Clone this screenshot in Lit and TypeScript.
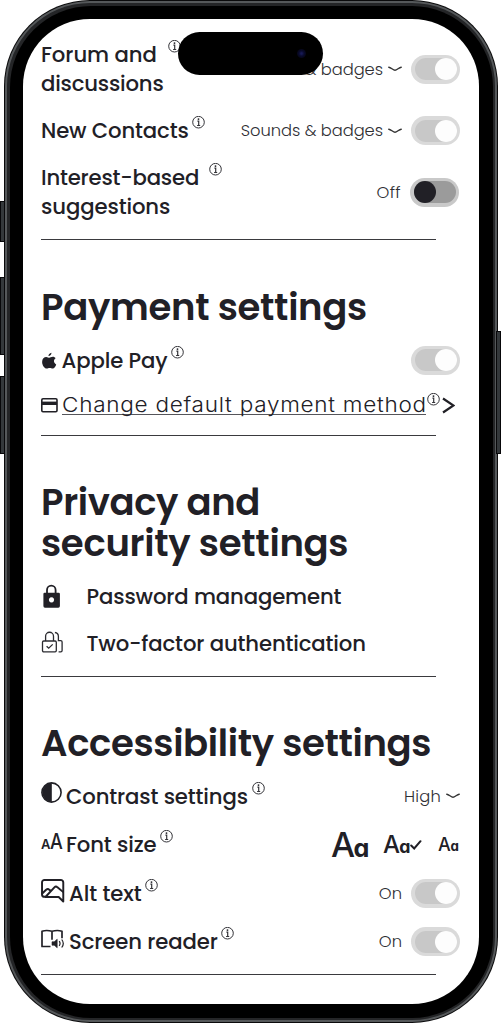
import { LitElement, html, css, svg, nothing } from "lit";
import { customElement, property } from "lit/decorators.js";

/** One line of text whose tracking is computed so that it fills `width` pixels. */
@customElement("fit-text")
class FitText extends LitElement {
  @property({ type: Number }) width = 0;
  @property() text = "";
  static styles = css`
    :host { display: block; white-space: nowrap; }
    .t { display: inline-block; }
  `;
  firstUpdated() {
    const el = this.renderRoot.querySelector(".t") as HTMLElement;
    const natural = el.offsetWidth;
    el.style.letterSpacing = (this.width - natural) / this.text.length + "px";
  }
  render() {
    return html`<span class="t">${this.text}</span>`;
  }
}

@customElement("info-mark")
class InfoMark extends LitElement {
  static styles = css`
    :host { display: block; width: 13px; height: 13px; }
    svg { display: block; }
  `;
  render() {
    return html`<svg width="13" height="13" viewBox="0 0 13 13" fill="none" stroke="#333338">
      <circle cx="6.5" cy="6.2" r="5.8" stroke-width="1" />
      <path d="M5.4 5.1h1.300v4.400M5.1 9.500h3.100" stroke-width="1.2" />
      <circle cx="6.500" cy="3.100" r=".95" fill="#222228" stroke="none" />
    </svg>`;
  }
}

@customElement("toggle-switch")
class ToggleSwitch extends LitElement {
  @property({ type: Boolean, reflect: true }) off = false;
  static styles = css`
    :host { display: block; box-sizing: border-box; width: 49px; height: 29px; border-radius: 15px; background: #dadada; padding: 3.5px; }
    .track { height: 22px; border-radius: 11px; background: #c8c8c8; display: flex; justify-content: flex-end; }
    .knob { width: 22px; height: 22px; border-radius: 50%; background: #fdfdfd; }
    :host([off]) { background: #c9c9c9; margin-right: 1px; }
    :host([off]) .track { background: #9b9b9b; justify-content: flex-start; }
    :host([off]) .knob { background: #212026; }
  `;
  render() {
    return html`<div class="track"><div class="knob"></div></div>`;
  }
}

const caret = svg`<svg class="caret" width="14" height="6" viewBox="0 0 14 6" fill="none" stroke="#333" stroke-width="1.4" stroke-linecap="round"><path d="M.8 1.200C3 1.600 5.200 4.200 7 4.200S11 1.600 13.200 1.200"/></svg>`;

const icons = {
  apple: svg`<svg width="16" height="18" viewBox="0 0 15 17" fill="#212026"><path d="M9.800.600c.2 1.600-1.200 3.200-2.800 3.200C6.800 2.300 8.300.8 9.800.600zM13.700 6c-2.300 1.500-1.800 4.700.6 5.700-.6 1.700-1.800 4-3.300 4-1.100 0-1.500-.7-2.800-.7s-1.800.7-2.800.7C3.100 15.700 1 12.300 1 9.400c0-3 1.900-4.700 3.900-4.700 1.200 0 2.200.8 2.900.8.8 0 1.900-.9 3.300-.9 1.100 0 2 .5 2.600 1.400z"/></svg>`,
  card: svg`<svg width="17" height="15" viewBox="0 0 17 15"><rect x=".8" y=".8" width="15.200" height="13" rx="1.200" fill="none" stroke="#212026" stroke-width="1.600"/><path d="M1 3.600h15v3.400H1z" fill="#212026"/></svg>`,
  lock: svg`<svg width="20" height="24" viewBox="0 0 20 24"><path d="M6 10V6a4.300 4.300 0 0 1 8.600 0v4" fill="none" stroke="#212026" stroke-width="1.800"/><path fill-rule="evenodd" fill="#212026" d="M3.600 8.800h14a1.300 1.300 0 0 1 1.300 1.300v12a1.600 1.600 0 0 1-1.600 1.600H4a1.600 1.600 0 0 1-1.600-1.600v-12A1.300 1.300 0 0 1 3.600 8.800zM10.500 13.300a2.600 2.600 0 1 0 .01 0z"/></svg>`,
  locks: svg`<svg width="22" height="22" viewBox="0 0 22 22" fill="none" stroke="#2b2b30" stroke-width="1.300"><path d="M4.600 10V5.200a3.700 3.700 0 0 1 7.900 0V10"/><rect x="1.500" y="10" width="13.800" height="10.800" rx="1.200"/><path d="m5.600 15.200 2.100 2 4-3.800"/><path d="M13.900 1.500c2.200.3 3.500 1.800 3.500 3.900v4.300h2.400a1.300 1.300 0 0 1 1.300 1.300v8.500a1.300 1.300 0 0 1-1.300 1.300h-2.200" /></svg>`,
  contrast: svg`<svg width="21" height="21" viewBox="0 0 21 21"><circle cx="10.500" cy="10.500" r="9.600" fill="none" stroke="#212026" stroke-width="1.600"/><path d="M10.800 1v19A9.500 9.500 0 0 1 10.800 1z" fill="#212026"/></svg>`,
  picture: svg`<svg width="23.500" height="24" viewBox="0 0 23 24" preserveAspectRatio="none" fill="none" stroke="#212026" stroke-width="1.900" stroke-linejoin="round" stroke-linecap="round"><path d="M4 17.800h-.6A2.400 2.400 0 0 1 1 15.400V3.400A2.400 2.400 0 0 1 3.400 1h16A2.400 2.400 0 0 1 21.800 3.400V22.500l-4.500-4.500H4"/><path d="M1.200 14.500 5 10.800q1.700-1.500 3.200 0L9 11.500M4.800 17.500l8.300-9.200q1.500-1.500 3 0l5.400 4.600"/></svg>`,
  reader: svg`<svg width="24" height="21" viewBox="0 0 24 21" fill="none" stroke="#212026" stroke-width="1.700" stroke-linejoin="round"><path d="M9.500 17.500H1V2.200Q5.500.8 11 2.200q5.500-1.400 10 0v7M11 2.200v8.600"/><path d="M11 12.800h2.200l3-2.600v8.600l-3-2.600H11z" fill="#212026" stroke-width=".6"/><path d="M18.200 12.200q1.700 2.300 0 4.600M20.700 10.500q3.200 4 0 8" stroke-width="1.200"/></svg>`,
  glyphs: html`<span class="glyphs"><span class="g1">A</span><span class="g2">A</span></span>`,
};

const sw = html`<toggle-switch></toggle-switch>`;

@customElement("app-root")
class AppRoot extends LitElement {
  static styles = css`
    :host { display: block; width: 501px; height: 1024px; overflow: hidden; background: #fff; position: relative; color: #212026; font-family: Poppins, Inter, sans-serif; }
    .device { box-sizing: border-box; width: 494px; height: 1023px; margin-left: 4px; border-radius: 86px; padding: 1px; background: #0a0a0b; }
    .rim { box-sizing: border-box; height: 100%; border-radius: 85px; padding: 2px; background: #55585a; }
    .edge { box-sizing: border-box; height: 100%; border-radius: 83px; padding: 2.5px; background: #242527; }
    .bezel { box-sizing: border-box; height: 100%; border-radius: 81px; padding: 13.5px; background: #000; }
    .screen { box-sizing: border-box; height: 985px; border-radius: 67px; background: #fff; padding: 21px 18px 0; overflow: hidden; }
    .button { position: absolute; width: 5px; background: #34383b; border: 1px solid #08080a; box-sizing: border-box; }
    .b1 { left: 0; top: 201px; height: 41px; }
    .b2 { left: 0; top: 277px; height: 78px; }
    .b3 { left: 0; top: 376px; height: 78px; }
    .b4 { right: 0; top: 331px; height: 123px; }
    .island { position: absolute; left: 178px; top: 32px; width: 145px; height: 42.5px; border-radius: 22px; background: #000; }
    .camera { position: absolute; right: 17px; top: 17px; width: 9px; height: 9px; border-radius: 50%; background: radial-gradient(#171a55 0 10%, #090a2c 40%, #020205); }
    section { border-bottom: 1.5px solid #3a3a3e; width: 395px; box-sizing: border-box; }
    .rows { display: flex; flex-direction: column; width: 419px; }
    .s1 { height: 200px; } .s1 .rows { gap: 18px; }
    .s2 { height: 195.5px; padding-top: 46.5px; } .s2 .rows { gap: 15.5px; }
    .s3 { height: 241px; padding-top: 46px; } .s3 .rows { gap: 18.5px; }
    .s4 { height: 298px; padding-top: 46.5px; } .s4 .rows { gap: 19.6px; }
    h2 { margin: 0 0 18px; font-size: 37px; font-weight: 600; line-height: 41px; white-space: nowrap; }
    .s4 h2 { margin-bottom: 17.6px; }
    .row { display: flex; align-items: flex-start; min-height: 29px; }
    .s4 .row { height: 29px; }
    .label { font-size: 21.2px; line-height: 29px; font-weight: 500; }
    .link { font-family: Inter, sans-serif; font-size: 20.5px; font-weight: 300; width: 364px; height: 24px; border-bottom: 1.5px solid #55555a; }
    .link fit-text { transform: scaleX(1.1); transform-origin: left; }
    .lead { display: flex; align-items: flex-start; flex: none; }
    .w20 { width: 20.5px; } .w21 { width: 21px; } .w25 { width: 25px; } .w28 { width: 28px; } .w45 { width: 45.5px; }
    .p0 { padding-top: 0; } .p6 { padding-top: 6px; } .p8 { padding-top: 8px; } .p2 { padding-top: 2px; }
    .i2 { margin: 2.5px 0 0 1px; } .i4 { margin-left: 3.5px; } .i5 { margin-left: 4.5px; } .i12 { margin-left: 10px; }
    .trail { margin-left: auto; align-self: center; display: flex; align-items: center; font-size: 16.3px; line-height: 19px; font-weight: 300; color: #2e2e33; }
    .trail toggle-switch { margin-left: 9px; }
    .caret { margin-left: 5px; }
    .chevron { margin: 7px 0 0 2px; }
    .glyphs { display: flex; align-items: baseline; line-height: 29px; font-family: Inter, sans-serif; margin-top: -3.5px; }
    .g1 { font-size: 13px; font-weight: 600; } .g2 { font-size: 22px; font-weight: 500; transform: scaleX(.82); transform-origin: left; }
    .sizes { display: flex; margin-left: auto; align-items: flex-start; font-family: Inter, sans-serif; font-feature-settings: "cv11"; font-weight: 500; line-height: 29px; white-space: nowrap; }
    .big { width: 37px; font-size: 34px; letter-spacing: -1.5px; }
    .mid { width: 26px; margin-left: 15px; font-size: 24px; letter-spacing: -.8px; }
    .small { width: 22px; margin-left: 16px; font-size: 18px; letter-spacing: -.2px; }
    .sizes span span { font-size: .74em; font-weight: 700; }
    .tick { margin: 9.5px 0 0 1px; }
  `;

  label(lines: [string, number][], info = "", link = false) {
    return html`<div class="label ${link ? "link" : ""}">${lines.map(
        ([t, w]) => html`<fit-text text=${t} width=${w}></fit-text>`)}</div>
      ${info ? html`<info-mark class=${info}></info-mark>` : nothing}`;
  }

  render() {
    return html`
      <div class="button b1"></div><div class="button b2"></div><div class="button b3"></div><div class="button b4"></div>
      <div class="device"><div class="rim"><div class="edge"><div class="bezel"><main class="screen">
        <section class="s1"><div class="rows">
          <div class="row">${this.label([["Forum and", 115.5], ["discussions", 123]], "i5")}
            <div class="trail"><fit-text text="Sounds & badges" width="142.500"></fit-text>${caret}${sw}</div></div>
          <div class="row">${this.label([["New Contacts", 147.5]], "i4")}
            <div class="trail"><fit-text text="Sounds & badges" width="142.500"></fit-text>${caret}${sw}</div></div>
          <div class="row">${this.label([["Interest-based", 158.5], ["suggestions", 129]], "i12")}
            <div class="trail"><fit-text text="Off" width="24"></fit-text><toggle-switch off></toggle-switch></div></div>
        </div></section>
        <section class="s2"><h2><fit-text text="Payment settings" width="326"></fit-text></h2><div class="rows">
          <div class="row"><span class="lead w20 p6">${icons.apple}</span>${this.label([["Apple Pay", 106]], "i4")}
            <div class="trail">${sw}</div></div>
          <div class="row"><span class="lead w21 p8">${icons.card}</span>${this.label([["Change default payment method", 332]], "i2", true)}
            <svg class="chevron" width="13" height="17" viewBox="0 0 13 17" fill="none" stroke="#212026" stroke-width="2.200"><path d="m1 1.500 10.500 7L1 15.500"/></svg></div>
        </div></section>
        <section class="s3"><h2><fit-text text="Privacy and" width="219"></fit-text><fit-text text="security settings" width="307"></fit-text></h2><div class="rows">
          <div class="row"><span class="lead w45 p2">${icons.lock}</span>${this.label([["Password management", 254.5]])}</div>
          <div class="row"><span class="lead w45 p2">${icons.locks}</span>${this.label([["Two-factor authentication", 279]])}</div>
        </div></section>
        <section class="s4"><h2><fit-text text="Accessibility settings" width="390.500"></fit-text></h2><div class="rows">
          <div class="row"><span class="lead w25 p0">${icons.contrast}</span>${this.label([["Contrast settings", 182]], "i5")}
            <div class="trail"><fit-text text="High" width="37"></fit-text>${caret}</div></div>
          <div class="row"><span class="lead w25">${icons.glyphs}</span>${this.label([["Font size", 91]], "i4")}
            <div class="sizes"><span class="big">A<span>a</span></span><span class="mid">A<span>a</span></span>
              <svg class="tick" width="12" height="10" viewBox="0 0 12 10" fill="none" stroke="#212026" stroke-width="2" stroke-linecap="round"><path d="m1.200 5.500 3 3L10.500 1.200"/></svg>
              <span class="small">A<span>a</span></span></div></div>
          <div class="row"><span class="lead w28 p0">${icons.picture}</span>${this.label([["Alt text", 72.5]], "i4")}
            <div class="trail"><fit-text text="On" width="23"></fit-text>${sw}</div></div>
          <div class="row"><span class="lead w28 p2">${icons.reader}</span>${this.label([["Screen reader", 148.5]], "i4")}
            <div class="trail"><fit-text text="On" width="23"></fit-text>${sw}</div></div>
        </div></section>
      </main></div></div></div></div>
      <div class="island"><div class="camera"></div></div>`;
  }
}
